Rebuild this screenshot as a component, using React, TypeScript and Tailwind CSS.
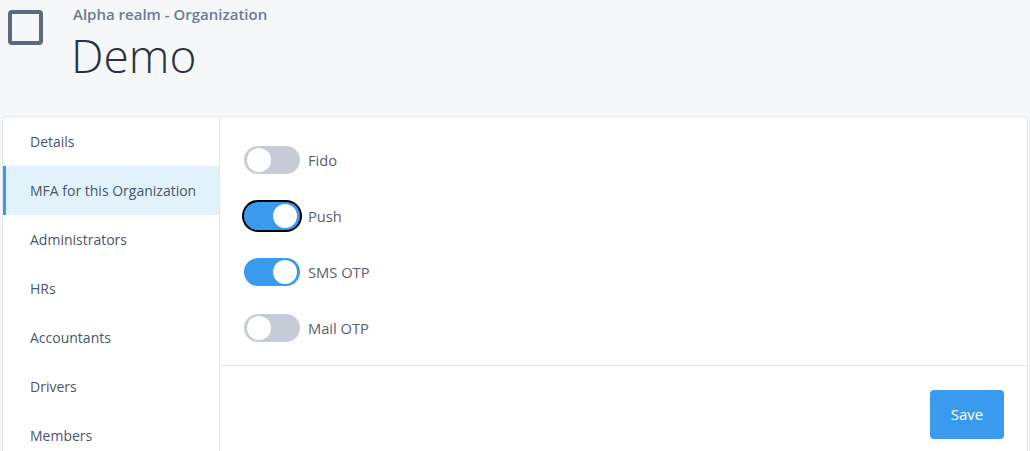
import React from "react";

function Toggle({ on, focused }: { on: boolean; focused?: boolean }) {
  return (
    <div
      className={
        "relative w-[56px] h-[28px] rounded-full flex items-center px-[3px] " +
        (on ? "bg-[#3a9bee] justify-end " : "bg-[#c6ccd7] justify-start ") +
        (focused ? "ring-2 ring-black" : "")
      }
    >
      <div className="w-[24px] h-[24px] rounded-full bg-white" />
    </div>
  );
}

export default function App() {
  const items = [
    "Details",
    "MFA for this Organization",
    "Administrators",
    "HRs",
    "Accountants",
    "Drivers",
    "Members",
  ];
  const toggles: { label: string; on: boolean; focused?: boolean }[] = [
    { label: "Fido", on: false },
    { label: "Push", on: true, focused: true },
    { label: "SMS OTP", on: true },
    { label: "Mail OTP", on: false },
  ];
  return (
    <div
      className="w-full h-[451px] overflow-hidden bg-[#f5f7f9]"
      style={{ fontFamily: '"Open Sans", "Noto Sans", sans-serif' }}
    >
      <div className="flex h-[116px]">
        <div className="pl-[8px] pt-[10px]">
          <div className="w-[35px] h-[35px] rounded-[4px] border-[4px] border-[#5b6a82]" />
        </div>
        <div className="pl-[30px] pt-[3px]">
          <div className="text-[15px] leading-[22px] font-semibold text-[#6e7b8f]">
            Alpha realm - Organization
          </div>
          <div className="text-[46px] leading-[56px] font-light text-[#2b313b] mt-[2px] ml-[-2px]">
            Demo
          </div>
        </div>
      </div>
      <div className="mx-[2px] bg-white border border-[#e3e8ee] rounded-[4px] flex h-[400px]">
        <div className="w-[217px] border-r border-[#e3e8ee] shrink-0">
          {items.map((it, i) => (
            <div
              key={it}
              className={
                "h-[49px] flex items-center text-[14px] text-[#4a5568] " +
                (i === 1
                  ? "bg-[#e2f2fb] border-l-[3px] border-[#3a9bee] pl-[24px]"
                  : "pl-[27px]")
              }
            >
              {it}
            </div>
          ))}
        </div>
        <div className="flex-1 flex flex-col">
          <div className="pt-[29px] pb-[23px] pl-[24px] flex flex-col gap-[28px] border-b border-[#e3e8ee]">
            {toggles.map((t) => (
              <div key={t.label} className="flex items-center gap-[8px]">
                <Toggle on={t.on} focused={t.focused} />
                <span className="text-[14.7px] text-[#566273]">{t.label}</span>
              </div>
            ))}
          </div>
          <div className="flex justify-end pr-[23px] pt-[24px]">
            <button className="w-[74px] h-[49px] rounded-[4px] bg-[#3a9bee] text-white text-[15px]">
              Save
            </button>
          </div>
        </div>
      </div>
    </div>
  );
}
